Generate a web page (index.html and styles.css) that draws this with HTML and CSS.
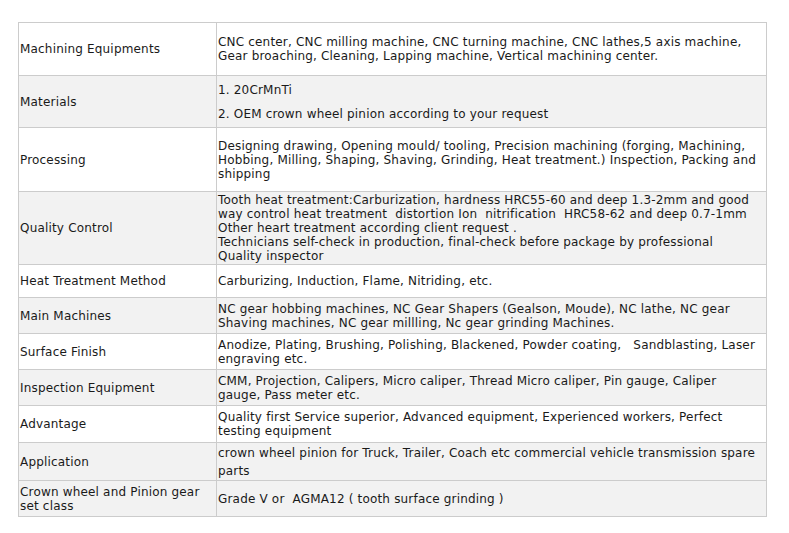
FILE: index.html
```html
<!DOCTYPE html>
<html>
<head>
<meta charset="utf-8">
<link rel="stylesheet" href="styles.css">
</head>
<body>
<table class="spec">
  <tr class="r1 white">
    <td class="k">Machining Equipments</td>
    <td class="v">CNC center, CNC milling machine, CNC turning machine, CNC lathes,5 axis machine, Gear broaching, Cleaning, Lapping machine, Vertical machining center.</td>
  </tr>
  <tr class="r2 gray">
    <td class="k">Materials</td>
    <td class="v"><p class="para">1. 20CrMnTi</p><p class="para">2. OEM crown wheel pinion according to your request</p></td>
  </tr>
  <tr class="r3 white">
    <td class="k">Processing</td>
    <td class="v">Designing drawing, Opening mould/ tooling, Precision machining (forging, Machining, Hobbing, Milling, Shaping, Shaving, Grinding, Heat treatment.) Inspection, Packing and shipping</td>
  </tr>
  <tr class="r4 gray">
    <td class="k">Quality Control</td>
    <td class="v">Tooth heat treatment:Carburization, hardness HRC55-60 and deep 1.3-2mm and good way control heat treatment&nbsp; distortion Ion&nbsp; nitrification&nbsp; HRC58-62 and deep 0.7-1mm<br>Other heart treatment according client request .<br>Technicians self-check in production, final-check before package by professional Quality inspector</td>
  </tr>
  <tr class="r5 white">
    <td class="k">Heat Treatment Method</td>
    <td class="v">Carburizing, Induction, Flame, Nitriding, etc.</td>
  </tr>
  <tr class="r6 gray">
    <td class="k">Main Machines</td>
    <td class="v">NC gear hobbing machines, NC Gear Shapers (Gealson, Moude), NC lathe, NC gear Shaving machines, NC gear millling, Nc gear grinding Machines.</td>
  </tr>
  <tr class="r7 white">
    <td class="k">Surface Finish</td>
    <td class="v">Anodize, Plating, Brushing, Polishing, Blackened, Powder coating,&nbsp;&nbsp;&nbsp;Sandblasting, Laser engraving etc.</td>
  </tr>
  <tr class="r8 gray">
    <td class="k">Inspection Equipment</td>
    <td class="v">CMM, Projection, Calipers, Micro caliper, Thread Micro caliper, Pin gauge, Caliper gauge, Pass meter etc.</td>
  </tr>
  <tr class="r9 white">
    <td class="k">Advantage</td>
    <td class="v">Quality first Service superior, Advanced equipment, Experienced workers, Perfect testing equipment</td>
  </tr>
  <tr class="r10 gray">
    <td class="k">Application</td>
    <td class="v tall">crown wheel pinion for Truck, Trailer, Coach etc commercial vehicle transmission spare parts</td>
  </tr>
  <tr class="r11 gray">
    <td class="k">Crown wheel and Pinion gear set class</td>
    <td class="v">Grade V or&nbsp; AGMA12 ( tooth surface grinding )</td>
  </tr>
</table>
</body>
</html>
```

FILE: styles.css
```css
body {
  margin: 8px;
  background: #ffffff;
  font-family: "DejaVu Sans", Verdana, sans-serif;
  font-size: 12px;
  letter-spacing: 0.18px;
  color: #1a1a1a;
}

.spec {
  border-collapse: collapse;
  margin: 14px 0 0 10px;
  width: 749px;
  table-layout: fixed;
}

.spec td {
  border: 1px solid #cccccc;
  padding: 0 1px;
  vertical-align: middle;
  line-height: 14px;
}

.spec .k {
  width: 195px;
}

.spec .v {
  padding-right: 6px;
}

.white { background: #ffffff; }
.gray { background: #f2f2f2; }

.para {
  margin: 0;
  line-height: 14px;
}
.para + .para {
  margin-top: 10px;
}

.spec .tall { line-height: 18px; }

.r1 { height: 53px; }
.r2 { height: 52px; }
.r3 { height: 64px; }
.r4 { height: 73px; }
.r5 { height: 33px; }
.r6 { height: 36px; }
.r7 { height: 36px; }
.r8 { height: 36px; }
.r9 { height: 37px; }
.r10 { height: 38px; }
.r11 { height: 36px; }
```
